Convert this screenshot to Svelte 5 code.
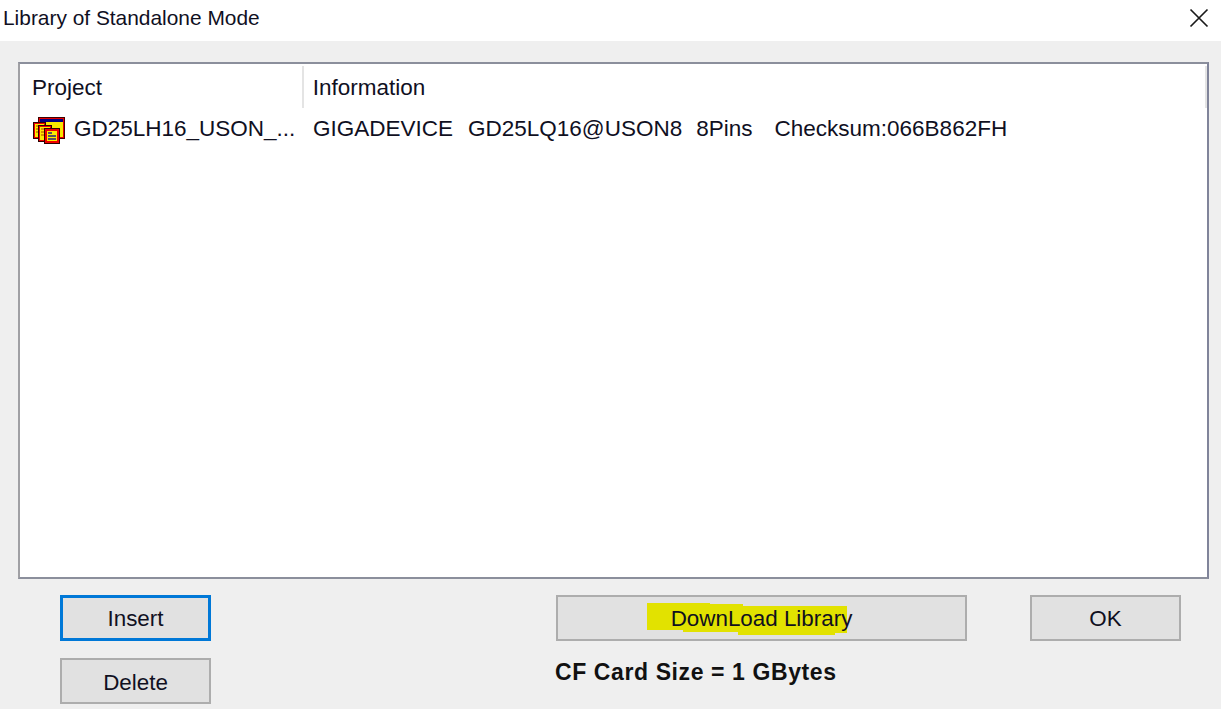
<script>
  const columns = [
    { label: 'Project', width: 284 },
    { label: 'Information', width: 904 }
  ];
</script>

<div class="dialog">
  <header class="titlebar">
    <span class="title">Library of Standalone Mode</span>
    <svg class="close" viewBox="0 0 20 20" width="20" height="20" aria-label="Close">
      <path d="M1.5 1.5 L18.5 18.5 M18.5 1.5 L1.5 18.5" stroke="#1a1a1a" stroke-width="1.7" fill="none" />
    </svg>
  </header>

  <main class="body">
    <section class="list">
      <div class="head">
        {#each columns as c}
          <div class="th" style="width:{c.width}px">{c.label}</div>
        {/each}
      </div>
      <div class="row">
        <div class="cell first">
          <svg class="icon" viewBox="0 0 32 27" width="32" height="27">
            <rect x="5" y="0" width="27" height="22" fill="#400000" />
            <rect x="6" y="1" width="25" height="20" fill="#e80000" />
            <rect x="7" y="2" width="23" height="3" fill="#000080" />
            <rect x="7" y="5" width="23" height="15" fill="#f8e800" />
            <rect x="0" y="5" width="13" height="17" fill="#300000" />
            <rect x="1" y="6" width="11" height="15" fill="#f00000" />
            <rect x="2" y="7" width="9" height="13" fill="#fdec00" />
            <path d="M3 9h7M3 12h7M3 15h7" stroke="#b04000" stroke-width="1" />
            <rect x="5" y="8" width="14" height="17" fill="#300000" />
            <rect x="6" y="9" width="12" height="15" fill="#f00000" />
            <rect x="7" y="10" width="10" height="13" fill="#fdec00" />
            <path d="M8 12h8M8 15h8M8 18h8" stroke="#b04000" stroke-width="1" />
            <rect x="11" y="11" width="16" height="16" fill="#300000" />
            <rect x="12" y="12" width="14" height="14" fill="#f00000" />
            <rect x="14" y="14" width="10" height="10" fill="#fdec00" />
            <path d="M15 16h4M15 19h8M15 22h8" stroke="#202080" stroke-width="1.4" />
          </svg>
          <span>GD25LH16_USON_...</span>
        </div>
        <div class="cell info">
          <span class="a">GIGADEVICE</span><span class="b">GD25LQ16@USON8</span><span class="c">8Pins</span><span>Checksum:066B862FH</span>
        </div>
      </div>
    </section>

    <div class="actions">
      <button class="insert">Insert</button>
      <button class="download">
        <svg class="marker" viewBox="0 0 202 34" width="202" height="34" aria-hidden="true">
          <path d="M1 1 H64 V2 H97 V4 H201 V31 H189 V33 H92 V30 H37 V28 H1 Z" fill="#e2e200" />
        </svg>
        <span>DownLoad Library</span>
      </button>
      <button class="ok">OK</button>
      <button class="delete">Delete</button>
      <div class="size">CF Card Size = 1 GBytes</div>
    </div>
  </main>
</div>

<style>
  :global(body) {
    margin: 0;
    background: #efefef;
  }
  .dialog {
    width: 1221px;
    height: 709px;
    overflow: hidden;
    display: flex;
    flex-direction: column;
    font-family: "Liberation Sans", Arial, sans-serif;
    font-size: 22.5px;
    color: #10101f;
    background: #efefef;
  }
  .titlebar {
    flex: 0 0 41px;
    background: #fff;
    display: flex;
    align-items: center;
    justify-content: space-between;
    padding: 0 12px 6px 3px;
    box-sizing: border-box;
  }
  .title {
    font-size: 20.9px;
  }
  .body {
    flex: 1;
    padding: 21px 12px 0 18px;
    display: flex;
    flex-direction: column;
  }
  .list {
    height: 517px;
    box-sizing: border-box;
    background: #fff;
    border: 2px solid #8b8f9c;
    border-right-color: #80849a;
    border-left-color: #a0a0a4;
  }
  .head {
    display: flex;
    height: 44px;
    padding-top: 2px;
    box-sizing: border-box;
  }
  .th {
    box-sizing: border-box;
    padding-left: 12px;
    border-right: 2px solid #e4e4e4;
    line-height: 44px;
  }
  .th + .th {
    padding-left: 9px;
  }
  .row {
    display: flex;
    align-items: center;
    height: 42px;
  }
  .cell.first {
    width: 284px;
    padding-left: 12px;
    box-sizing: border-box;
    display: flex;
    align-items: center;
    gap: 9px;
    white-space: nowrap;
  }
  .icon {
    margin-left: 1px;
    margin-top: 2px;
  }
  .cell.info {
    padding-left: 9px;
    white-space: nowrap;
  }
  .a { margin-right: 15px; }
  .b { margin-right: 14px; }
  .c { margin-right: 22px; }
  .actions {
    display: grid;
    grid-template-columns: 151px 411px 151px;
    grid-template-rows: 46px 46px;
    row-gap: 17px;
    margin-top: 16px;
    padding-left: 42px;
    justify-content: start;
    position: relative;
  }
  button {
    font: inherit;
    font-size: 22.4px;
    color: inherit;
    background: #e1e1e1;
    border: 2px solid #adadad;
    padding: 2px 0 0;
    margin: 0;
    box-sizing: border-box;
  }
  .insert {
    grid-column: 1;
    grid-row: 1;
    border: 3px solid #0078d7;
  }
  .download {
    grid-column: 2;
    grid-row: 1;
    margin-left: 345px;
    width: 411px;
    position: relative;
  }
  .download span {
    position: relative;
  }
  .marker {
    position: absolute;
    left: 88px;
    top: 5px;
  }
  .ok {
    grid-column: 3;
    grid-row: 1;
    margin-left: 408px;
    width: 151px;
  }
  .delete {
    grid-column: 1;
    grid-row: 2;
    padding-top: 4px;
  }
  .size {
    grid-column: 2;
    grid-row: 2;
    margin-left: 344px;
    white-space: nowrap;
    font-weight: 700;
    font-size: 23px;
    letter-spacing: 0.6px;
    color: #111;
    line-height: 28px;
  }
</style>
